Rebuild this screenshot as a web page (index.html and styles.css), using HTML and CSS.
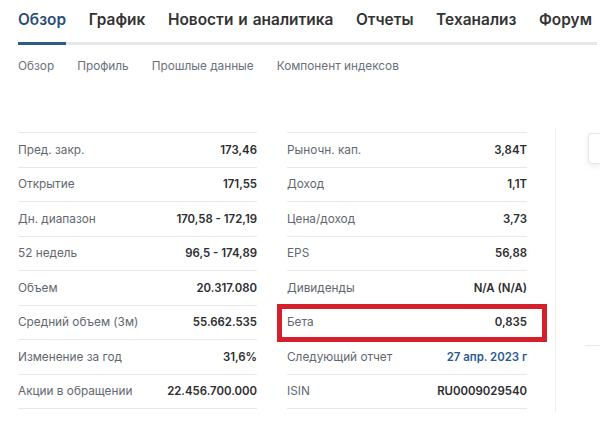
FILE: index.html
```html
<!DOCTYPE html>
<html lang="ru">
<head>
<meta charset="utf-8">
<link rel="stylesheet" href="styles.css">
</head>
<body>
<nav class="tabs">
  <a class="tab active">Обзор</a>
  <a class="tab">График</a>
  <a class="tab">Новости и аналитика</a>
  <a class="tab">Отчеты</a>
  <a class="tab">Теханализ</a>
  <a class="tab">Форум</a>
</nav>
<nav class="subtabs">
  <a>Обзор</a>
  <a>Профиль</a>
  <a>Прошлые данные</a>
  <a>Компонент индексов</a>
</nav>
<main class="content">
  <div class="col">
    <div class="row"><span class="lbl">Пред. закр.</span><span class="val">173,46</span></div>
    <div class="row"><span class="lbl">Открытие</span><span class="val">171,55</span></div>
    <div class="row"><span class="lbl">Дн. диапазон</span><span class="val">170,58 - 172,19</span></div>
    <div class="row"><span class="lbl">52 недель</span><span class="val">96,5 - 174,89</span></div>
    <div class="row"><span class="lbl">Объем</span><span class="val">20.317.080</span></div>
    <div class="row"><span class="lbl">Средний объем (3м)</span><span class="val">55.662.535</span></div>
    <div class="row"><span class="lbl">Изменение за год</span><span class="val">31,6%</span></div>
    <div class="row"><span class="lbl">Акции в обращении</span><span class="val">22.456.700.000</span></div>
  </div>
  <div class="col col-right">
    <div class="row"><span class="lbl">Рыночн. кап.</span><span class="val">3,84T</span></div>
    <div class="row"><span class="lbl">Доход</span><span class="val">1,1T</span></div>
    <div class="row"><span class="lbl">Цена/доход</span><span class="val">3,73</span></div>
    <div class="row"><span class="lbl">EPS</span><span class="val">56,88</span></div>
    <div class="row"><span class="lbl">Дивиденды</span><span class="val">N/A (N/A)</span></div>
    <div class="row highlighted"><span class="lbl">Бета</span><span class="val">0,835</span></div>
    <div class="row"><span class="lbl">Следующий отчет</span><span class="val link">27 апр. 2023 г</span></div>
    <div class="row"><span class="lbl">ISIN</span><span class="val">RU0009029540</span></div>
  </div>
  <div class="divider"></div>
  <aside class="side">
    <div class="card"></div>
    <div class="side-line"></div>
  </aside>
</main>
</body>
</html>
```
FILE: styles.css
```css
* { box-sizing: border-box; }
html, body { margin: 0; padding: 0; background: #fff; overflow: hidden; }
body {
  width: 600px;
  height: 430px;
  font-family: Inter, "Noto Sans", "Liberation Sans", sans-serif;
  color: #232526;
}
.tabs {
  display: flex;
  gap: 22.5px;
  margin: 0 3px 0 18px;
  border-bottom: 3px solid #e6e9eb;
  white-space: nowrap;
}
.tab {
  font-size: 15.4px;
  font-weight: 600;
  line-height: 20px;
  padding: 10px 0 12px;
  color: #333;
  word-spacing: 1px;
  letter-spacing: 0.04px;
}
.tab.active {
  color: #2c4d75;
  border-bottom: 3px solid #2e5a8a;
  margin-bottom: -3px;
}
.subtabs {
  display: flex;
  gap: 23px;
  padding: 13px 0 0 18px;
  font-size: 11.8px;
  line-height: 16px;
  color: #6a707c;
  white-space: nowrap;
}
.content {
  display: flex;
  align-items: flex-start;
  padding: 58px 0 0 18px;
}
.col {
  width: 239px;
  border-top: 1px solid #e6e9eb;
}
.col-right {
  width: 240px;
  margin-left: 30px;
}
.row {
  position: relative;
  display: flex;
  justify-content: space-between;
  align-items: center;
  height: 34.5px;
  border-bottom: 1px solid #e6e9eb;
  font-size: 11.8px;
}
.lbl { color: #62676f; }
.val { font-weight: 600; color: #2b2d30; font-size: 11.4px; }
.val.link { color: #2a5a94; }
.highlighted::after {
  content: "";
  position: absolute;
  left: -10px;
  right: -20px;
  top: -2px;
  bottom: -3px;
  border: 5px solid #d4202a;
}
.divider {
  width: 1px;
  height: 284px;
  margin: -4px 0 0 28px;
  background: #eceef0;
}
.side {
  flex: 1;
  margin-left: 32px;
}
.card {
  height: 31px;
  margin-top: 1px;
  border: 1px solid #e4e6e8;
  border-right: none;
  border-radius: 4px 0 0 4px;
  box-shadow: 0 2px 6px rgba(0,0,0,0.08);
}
.side-line {
  margin-top: 181px;
  margin-left: -3px;
  height: 1px;
  background: #e6e9eb;
}
```
